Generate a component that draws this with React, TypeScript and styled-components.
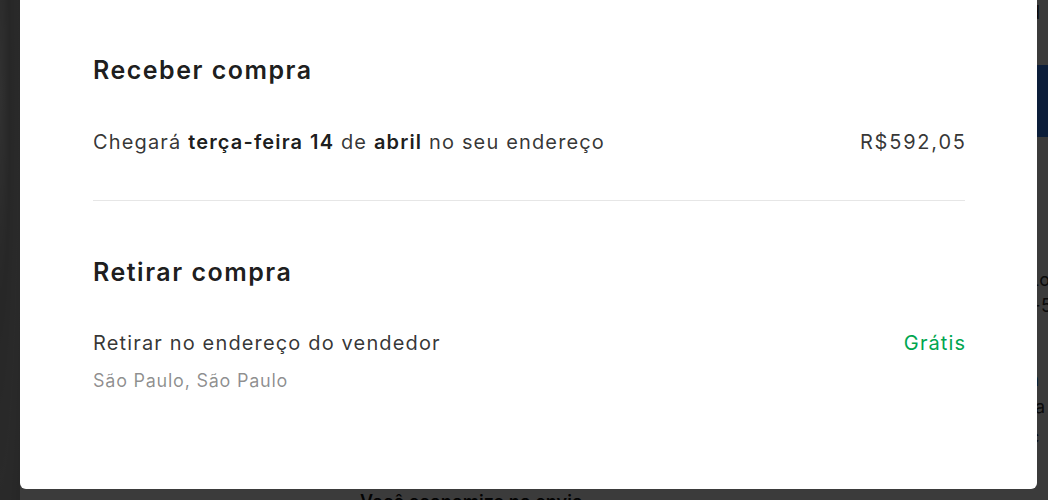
import React from 'react';
import styled, { createGlobalStyle } from 'styled-components';

const GlobalStyle = createGlobalStyle`
  html, body {
    margin: 0;
    padding: 0;
    width: 100%;
    height: 100%;
    overflow: hidden;
  }
  body {
    font-family: Inter, "Open Sans", Arial, sans-serif;
    background: #ededed;
  }
`;

/* page behind the modal */
const Page = styled.div`
  display: grid;
  grid-template-columns: 20px 1fr 300px;
  grid-template-rows: 489px 1fr;
  width: 1048px;
  height: 500px;
`;

const Gallery = styled.div`
  grid-row: 1 / 3;
  background: radial-gradient(ellipse at 0% 18%, #d4d4d4 0%, #a8a8a8 35%, #b4b4b4 65%, #a6a6a6 100%);
`;

const Center = styled.div`
  background: #fff;
`;

const Side = styled.div`
  background: #fff;
  display: flex;
  flex-direction: column;
  padding-left: 281px;
  font-size: 18px;
  color: #333;
  overflow: hidden;
`;

const SideText = styled.span<{ $top: number; $blue?: boolean }>`
  display: block;
  margin-top: ${(p) => p.$top}px;
  line-height: 22px;
  white-space: nowrap;
  color: ${(p) => (p.$blue ? '#3483fa' : '#333')};
`;

const BuyButton = styled.div`
  margin-top: 41px;
  height: 72px;
  background: #3483fa;
  border-radius: 6px 0 0 6px;
`;

const Footer = styled.div`
  grid-column: 2 / 4;
  background: #fff;
  padding: 2px 0 0 340px;
  font-size: 18px;
  line-height: 22px;
  color: #111;
  font-weight: 600;
  white-space: nowrap;
`;

const Backdrop = styled.div`
  position: fixed;
  inset: 0;
  background: rgba(0, 0, 0, 0.77);
`;

const Modal = styled.div`
  position: fixed;
  top: 0;
  left: 20px;
  width: 1017px;
  height: 489px;
  box-sizing: border-box;
  background: #fff;
  border-radius: 0 0 6px 6px;
  padding: 54px 72px 0 73px;
`;

const SectionTitle = styled.h2`
  margin: 0;
  font-size: 25px;
  line-height: 32px;
  font-weight: 600;
  letter-spacing: 1.5px;
  color: rgba(0, 0, 0, 0.9);
`;

const OptionRow = styled.div<{ $gap: number }>`
  display: flex;
  justify-content: space-between;
  align-items: flex-start;
  margin-top: ${(p) => p.$gap}px;
`;

const OptionText = styled.div`
  display: flex;
  flex-direction: column;
  gap: 12px;
`;

const Label = styled.span`
  font-size: 20px;
  line-height: 28px;
  letter-spacing: 1.15px;
  color: rgba(0, 0, 0, 0.8);

  b {
    font-weight: 600;
    color: rgba(0, 0, 0, 0.9);
  }
`;

const Sub = styled.span`
  font-size: 18px;
  line-height: 24px;
  letter-spacing: 0.75px;
  color: rgba(0, 0, 0, 0.45);
`;

const Price = styled.span<{ $free?: boolean }>`
  font-size: 20px;
  line-height: 28px;
  letter-spacing: ${(p) => (p.$free ? 1.1 : 1.8)}px;
  margin-right: ${(p) => (p.$free ? -1.1 : -1.8)}px;
  color: ${(p) => (p.$free ? '#00a650' : 'rgba(0, 0, 0, 0.8)')};
`;

const Divider = styled.hr`
  margin: 44px 0 55px;
  border: 0;
  border-top: 1px solid #e6e6e6;
`;

export default function App() {
  return (
    <>
      <GlobalStyle />
      <Page>
        <Gallery />
        <Center />
        <Side>
          <SideText $top={2}>d</SideText>
          <BuyButton />
          <SideText $top={132}>Lo</SideText>
          <SideText $top={4}>+5</SideText>
          <SideText $top={52} $blue>a</SideText>
          <SideText $top={5}>ta</SideText>
          <SideText $top={8}>c</SideText>
        </Side>
        <Footer>Você economiza no envio</Footer>
      </Page>
      <Backdrop />
      <Modal>
        <SectionTitle>Receber compra</SectionTitle>
        <OptionRow $gap={42}>
          <Label>
            Chegará <b>terça-feira</b> <b>14</b> de <b>abril</b> no seu endereço
          </Label>
          <Price>R$592,05</Price>
        </OptionRow>
        <Divider />
        <SectionTitle>Retirar compra</SectionTitle>
        <OptionRow $gap={41}>
          <OptionText>
            <Label>Retirar no endereço do vendedor</Label>
            <Sub>São Paulo, São Paulo</Sub>
          </OptionText>
          <Price $free>Grátis</Price>
        </OptionRow>
      </Modal>
    </>
  );
}
